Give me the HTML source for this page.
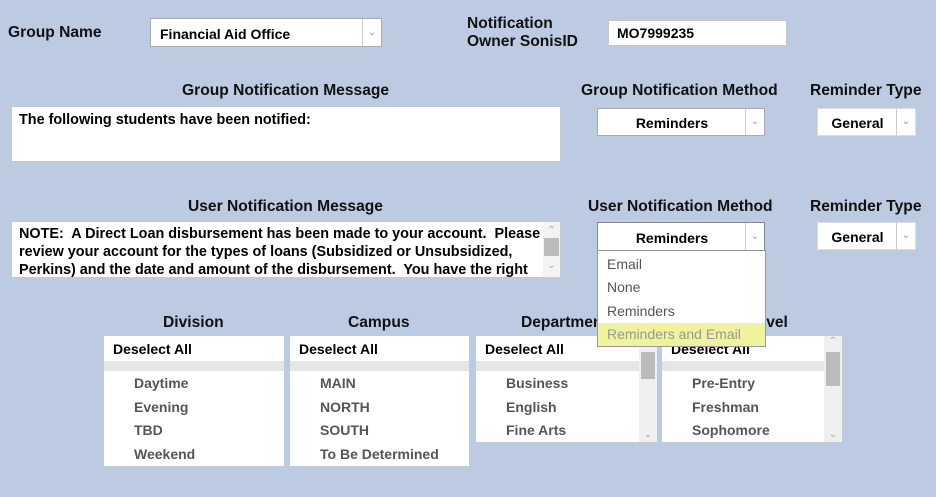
<!DOCTYPE html>
<html><head><style>
body{margin:0;width:936px;height:497px;background:#bccbe2;font-family:"Liberation Sans",Arial,sans-serif;position:relative;overflow:hidden}
.a{position:absolute}
.h{position:absolute;font-weight:bold;font-size:15.6px;color:#111;white-space:nowrap}
.box{position:absolute;background:#fff;border:1px solid #c8c8c8;box-sizing:border-box}
.sel{position:absolute;background:#fff;border:1px solid #ababab;box-sizing:border-box;font-weight:bold;font-size:14px;color:#000}
.sel .arr{position:absolute;right:0;top:0;bottom:0;width:18px;border-left:1px solid #ccc;color:#999;font-size:10px;text-align:center;font-weight:normal}
.ta{font-weight:bold;font-size:14.4px;line-height:18px;color:#000;padding:3px 7px;overflow:hidden}
.list{font-size:14px;font-weight:bold}
.list .d{position:absolute;left:9px;top:5px;color:#000}
.list .g{position:absolute;left:0;right:0;top:25px;height:10px;background:#e6e6e6}
.list .i{position:absolute;left:30px;color:#555}
.sb{position:absolute;right:0;top:0;bottom:0;width:18px;background:#f0f0f0}
.sb .t{position:absolute;left:2px;right:2px;background:#bbb}
</style></head><body>
<div class="h" style="left:8px;top:24px">Group Name</div>
<div class="sel" style="left:150px;top:18px;width:232px;height:29px"><span class="a" style="left:9px;top:7px">Financial Aid Office</span><div class="arr" style="line-height:27px">&#8964;</div></div>
<div class="h" style="left:467px;top:15px;line-height:18px">Notification<br>Owner SonisID</div>
<div class="box" style="left:608px;top:20px;width:179px;height:26px;font-weight:bold;font-size:14px;padding:4px 8px">MO7999235</div>

<div class="h" style="left:182px;top:82px">Group Notification Message</div>
<div class="box ta" style="left:11px;top:106px;width:550px;height:56px;padding-top:4px">The following students have been notified:</div>
<div class="h" style="left:581px;top:82px">Group Notification Method</div>
<div class="sel" style="left:597px;top:108px;width:168px;height:28px"><span class="a" style="left:0;right:18px;text-align:center;top:6px">Reminders</span><div class="arr" style="line-height:26px">&#8964;</div></div>
<div class="h" style="left:810px;top:82px">Reminder Type</div>
<div class="sel" style="left:817px;top:108px;width:99px;height:28px;border-color:#ddd"><span class="a" style="left:0;right:18px;text-align:center;top:6px">General</span><div class="arr" style="line-height:26px">&#8964;</div></div>

<div class="h" style="left:188px;top:198px">User Notification Message</div>
<div class="box ta" style="left:11px;top:221px;width:550px;height:57px;padding-right:18px">NOTE:&nbsp; A Direct Loan disbursement has been made to your account.&nbsp; Please review your account for the types of loans (Subsidized or Unsubsidized, Perkins) and the date and amount of the disbursement.&nbsp; You have the right to cancel all or part of the loan within 14 days of the disbursement.
<div class="sb" style="width:17px;background:#f3f3f3"><div class="a" style="top:0;left:0;right:0;text-align:center;color:#aaa;font-size:10px;font-weight:normal">&#8963;</div><div class="t" style="top:16px;height:18px;left:1px;right:1px"></div><div class="a" style="bottom:2px;left:0;right:0;text-align:center;color:#aaa;font-size:10px;font-weight:normal">&#8964;</div></div></div>
<div class="h" style="left:588px;top:198px">User Notification Method</div>
<div class="sel" style="left:597px;top:222px;width:168px;height:29px;border-color:#888"><span class="a" style="left:0;right:18px;text-align:center;top:7px">Reminders</span><div class="arr" style="line-height:27px">&#8964;</div></div>
<div class="h" style="left:810px;top:198px">Reminder Type</div>
<div class="sel" style="left:817px;top:222px;width:99px;height:28px;border-color:#ddd"><span class="a" style="left:0;right:18px;text-align:center;top:6px">General</span><div class="arr" style="line-height:26px">&#8964;</div></div>

<div class="h" style="left:163px;top:314px">Division</div>
<div class="h" style="left:348px;top:314px">Campus</div>
<div class="h" style="left:521px;top:314px">Department</div>
<div class="h" style="left:748px;top:314px">Level</div>

<div class="box list" style="left:104px;top:336px;width:180px;height:130px;border:none"><div class="d">Deselect All</div><div class="g"></div>
<div class="i" style="top:39px">Daytime</div><div class="i" style="top:63px">Evening</div><div class="i" style="top:86px">TBD</div><div class="i" style="top:110px">Weekend</div></div>
<div class="box list" style="left:290px;top:336px;width:179px;height:130px;border:none"><div class="d">Deselect All</div><div class="g"></div>
<div class="i" style="top:39px">MAIN</div><div class="i" style="top:63px">NORTH</div><div class="i" style="top:86px">SOUTH</div><div class="i" style="top:110px">To Be Determined</div></div>
<div class="box list" style="left:476px;top:336px;width:181px;height:106px;border:none"><div class="d">Deselect All</div><div class="g"></div>
<div class="i" style="top:39px">Business</div><div class="i" style="top:63px">English</div><div class="i" style="top:86px">Fine Arts</div>
<div class="sb"><div class="t" style="top:16px;height:27px"></div><div class="a" style="bottom:2px;left:0;right:0;text-align:center;color:#aaa;font-size:10px;font-weight:normal">&#8964;</div></div></div>
<div class="box list" style="left:662px;top:336px;width:180px;height:106px;border:none"><div class="d">Deselect All</div><div class="g"></div>
<div class="i" style="top:39px">Pre-Entry</div><div class="i" style="top:63px">Freshman</div><div class="i" style="top:86px">Sophomore</div>
<div class="sb"><div class="a" style="top:0;left:0;right:0;text-align:center;color:#aaa;font-size:10px;font-weight:normal">&#8963;</div><div class="t" style="top:16px;height:34px"></div><div class="a" style="bottom:2px;left:0;right:0;text-align:center;color:#aaa;font-size:10px;font-weight:normal">&#8964;</div></div></div>

<div class="box" style="left:597px;top:250px;width:169px;height:97px;border-color:#999;font-size:14px;color:#555">
<div class="a" style="left:9px;top:5px">Email</div>
<div class="a" style="left:9px;top:28px">None</div>
<div class="a" style="left:9px;top:52px">Reminders</div>
<div class="a" style="left:0;right:0;top:72px;height:23px;background:#eef39c;color:#999"><span class="a" style="left:9px;top:3px">Reminders and Email</span></div>
</div>
</body></html>
